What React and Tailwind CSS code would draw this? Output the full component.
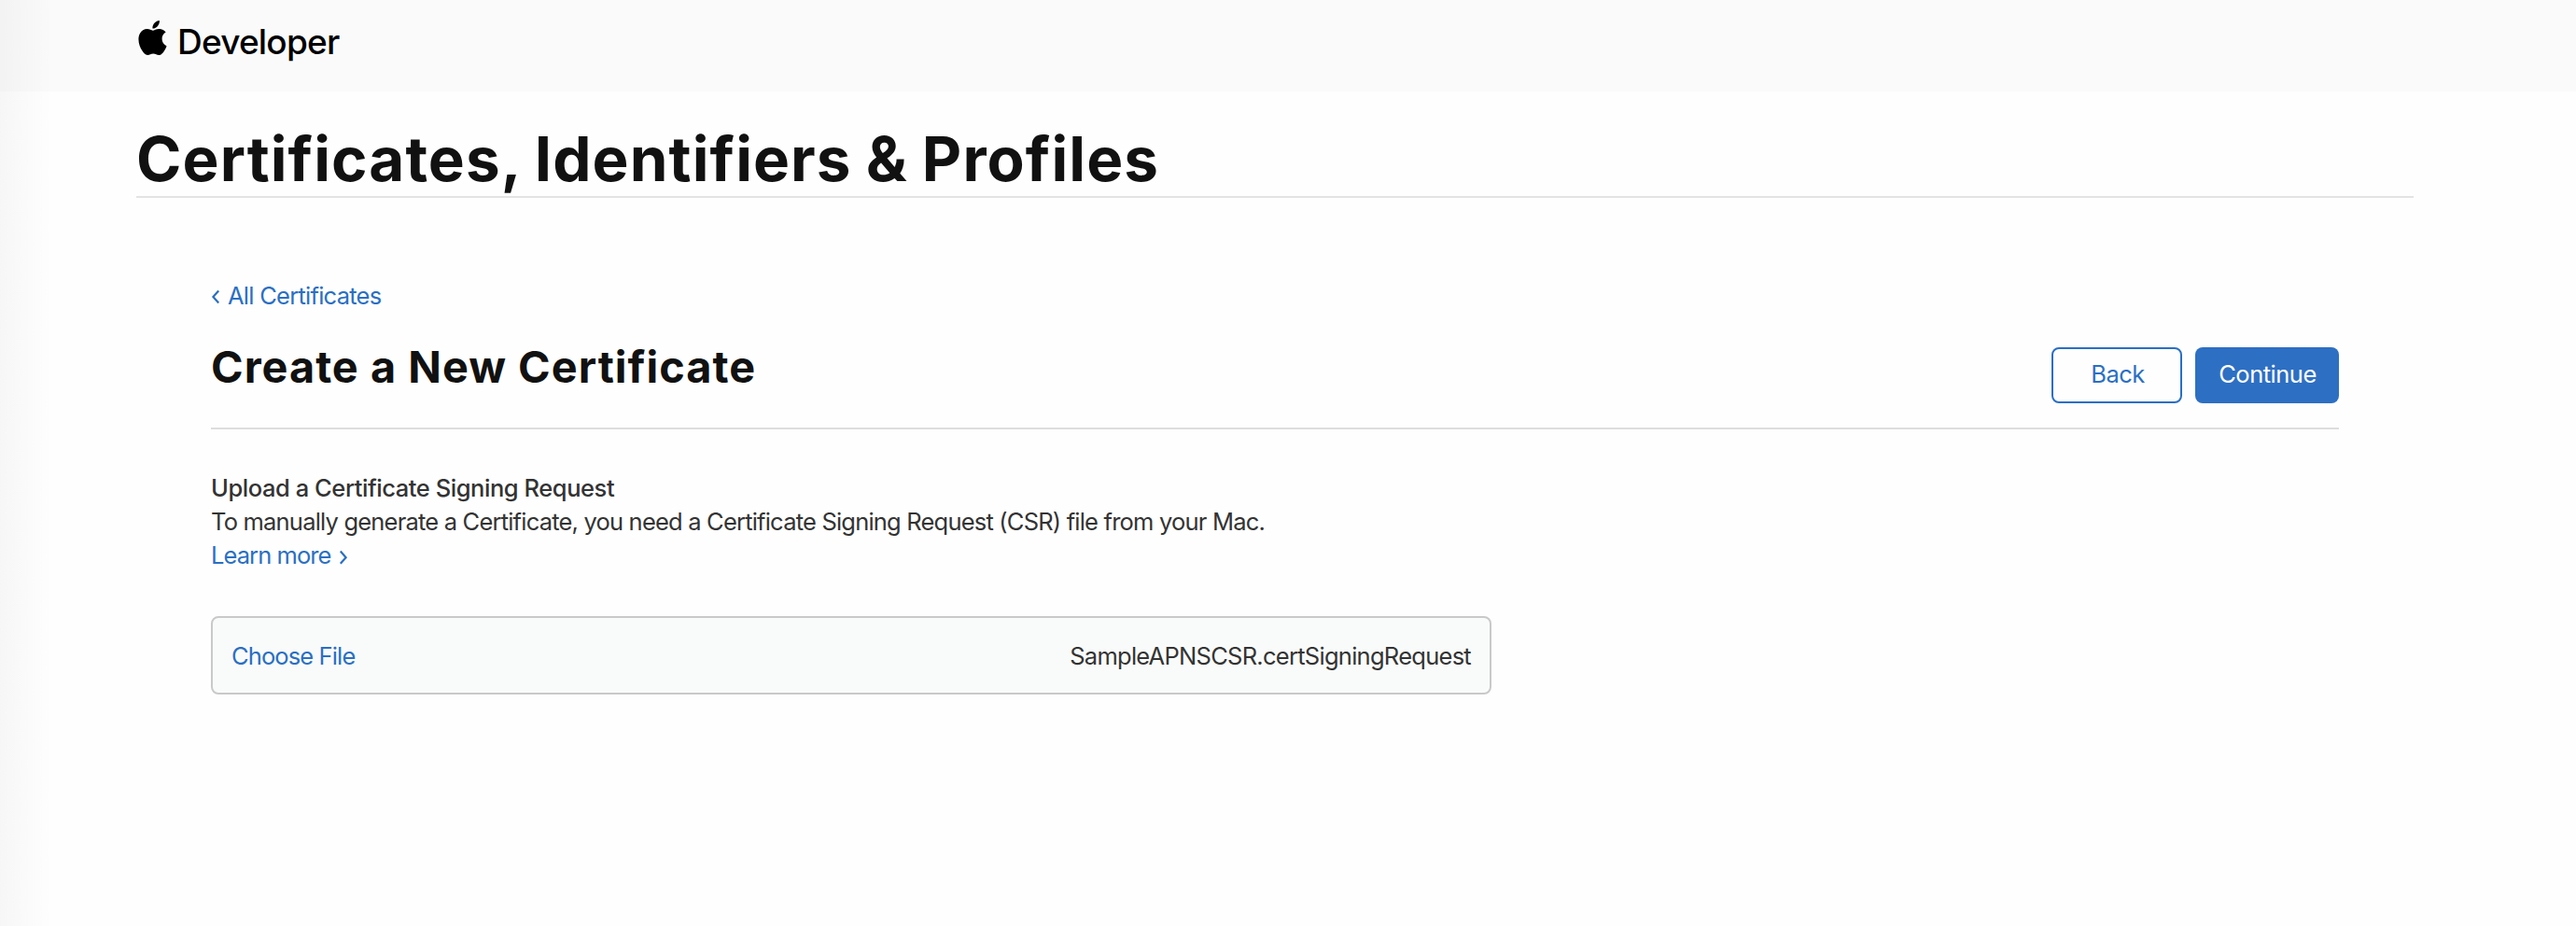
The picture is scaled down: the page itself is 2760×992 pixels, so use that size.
import React, { useState } from 'react';
import { SiApple } from 'react-icons/si';

const ChevronLeft = () => (
  <svg className="h-[18px] w-[10px]" viewBox="0 0 10 18" fill="none" stroke="currentColor" strokeWidth="2.2">
    <path d="M8.2 3.4 2.4 10l5.8 6.6" />
  </svg>
);

const ChevronRight = () => (
  <svg className="h-[18px] w-[10px]" viewBox="0 0 10 18" fill="none" stroke="currentColor" strokeWidth="2.2">
    <path d="m1.8 2.6 5.8 6.6-5.8 6.6" />
  </svg>
);

const App = () => {
  const [fileName] = useState('SampleAPNSCSR.certSigningRequest');

  return (
    <div className="relative h-[992px] w-[2760px] overflow-hidden bg-[#fefefe] font-['Inter',sans-serif] text-[25.5px] leading-9 text-[#333]">
      {/* Global header */}
      <header className="flex h-[98px] bg-[#fafafa] pl-[145px] pt-[22px] text-black">
        <SiApple className="size-[37px]" />
        <span className="ml-2 text-[37px] font-medium leading-[46px] tracking-[-0.8px]">Developer</span>
      </header>

      <main className="pl-[146px] pr-[174px]">
        <h1 className="h-[114px] border-b-2 border-[#e3e3e3] pt-[33px] text-[65.5px] font-[660] leading-[80px] tracking-[1.08px] text-[#111] [word-spacing:-1.5px]">
          Certificates, Identifiers &amp; Profiles
        </h1>

        <div className="px-20 pt-[87px]">
          <a href="#" className="flex w-fit items-center gap-2 tracking-[-0.74px] text-[#2a6fc4]">
            <ChevronLeft />
            All Certificates
          </a>

          {/* Title and actions */}
          <div className="flex h-[125px] items-start justify-between border-b-2 border-[#ddd]">
            <h2 className="mt-7 text-[46.8px] font-[660] leading-[60px] tracking-[1.03px] text-[#111]">
              Create a New Certificate
            </h2>
            <div className="mt-[37px] flex gap-3.5">
              <button className="h-[60px] w-[140px] rounded-lg border-2 border-[#2a6fc4] pb-0.5 pl-0.5 font-[440] tracking-[-0.5px] text-[#2a6fc4]">
                Back
              </button>
              <button className="h-[60px] w-[154px] rounded-lg bg-[#2d6fc3] pb-0.5 pl-px font-[440] tracking-[-0.5px] text-white">
                Continue
              </button>
            </div>
          </div>

          <div className="mt-[45px]">
            <h3 className="font-medium tracking-[-0.44px]">Upload a Certificate Signing Request</h3>
            <p className="tracking-[-0.8px]">
              To manually generate a Certificate, you need a Certificate Signing Request (CSR) file from your Mac.
            </p>
            <a href="#" className="flex w-fit items-center gap-[9px] tracking-[-0.93px] text-[#2a6fc4]">
              Learn more
              <span className="pt-1"><ChevronRight /></span>
            </a>
          </div>

          {/* File picker */}
          <div className="mt-[47px] flex h-[84px] w-[1372px] items-center justify-between rounded-lg border-2 border-[#c9c9c9] bg-[#f9fbfa] px-5 pt-0.5">
            <button className="tracking-[-0.88px] text-[#2a6fc4]">Choose File</button>
            <span className="tracking-[-0.73px]">{fileName}</span>
          </div>
        </div>
      </main>

      {/* Soft shadow along the window's left edge */}
      <div className="pointer-events-none absolute inset-y-0 left-0 w-[56px] bg-linear-to-r from-black/[0.03] to-transparent" />
    </div>
  );
};

export default App;
